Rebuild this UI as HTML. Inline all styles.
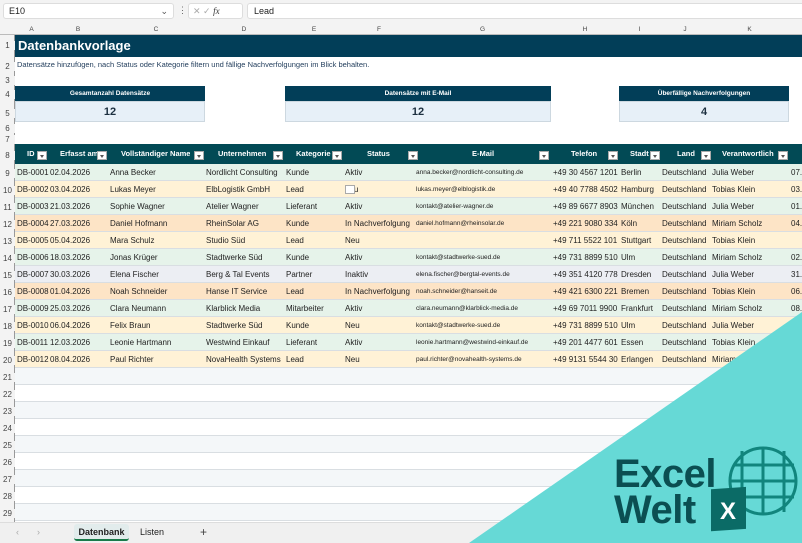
<!DOCTYPE html>
<html><head><meta charset="utf-8"><style>
*{margin:0;padding:0;box-sizing:border-box}
body{width:802px;height:543px;overflow:hidden;background:#fff;font-family:"Liberation Sans",sans-serif;position:relative;color:#222}
.a{position:absolute;white-space:nowrap;overflow:hidden}
.rh{position:absolute;left:0;width:15px;font-size:8px;color:#444;text-align:center;background:#f3f3f3}
.r{position:absolute;left:15px;width:787px;height:17px;border-bottom:1px solid #d9dee2;font-size:8px;line-height:17px}
.r span{position:absolute;top:0;white-space:nowrap;overflow:hidden}
.em{font-size:6.5px}
.hd span{color:#fff;font-weight:bold;font-size:7.5px}
.dd{position:absolute;width:10px;height:9px;background:#fff;border:1px solid #aaa;top:7px}
.dd:after{content:"";position:absolute;left:2px;top:3px;border:2.5px solid transparent;border-top:3px solid #555}
</style></head><body>
<div class="a" style="left:0;top:0;width:802px;height:24px;background:#f3f3f3"></div>
<div class="a" style="left:3px;top:3px;width:171px;height:16px;background:#fff;border:1px solid #ddd;border-radius:3px;font-size:9px;line-height:15px;padding-left:5px">E10<span style="position:absolute;right:5px;color:#555">⌄</span></div>
<div class="a" style="left:178px;top:5px;font-size:9px;color:#666">⋮</div>
<div class="a" style="left:188px;top:3px;width:55px;height:16px;background:#fff;border:1px solid #ddd;border-radius:3px;font-size:9px;line-height:15px;color:#aaa;padding-left:4px">✕ ✓ <i style="color:#333;font-family:'Liberation Serif'">fx</i></div>
<div class="a" style="left:247px;top:3px;width:560px;height:16px;background:#fff;border:1px solid #ddd;border-radius:3px;font-size:9px;line-height:15px;padding-left:6px">Lead</div>
<div class="a" style="left:0;top:24px;width:802px;height:11px;background:#f3f3f3;border-bottom:1px solid #bbb;font-size:6.5px;color:#444;line-height:11px">
<span class="a" style="left:15px;width:33px;text-align:center">A</span><span class="a" style="left:48px;width:60px;text-align:center">B</span><span class="a" style="left:108px;width:96px;text-align:center">C</span><span class="a" style="left:204px;width:80px;text-align:center">D</span><span class="a" style="left:284px;width:60px;text-align:center">E</span><span class="a" style="left:344px;width:70px;text-align:center">F</span><span class="a" style="left:414px;width:137px;text-align:center">G</span><span class="a" style="left:551px;width:68px;text-align:center">H</span><span class="a" style="left:619px;width:41px;text-align:center">I</span><span class="a" style="left:660px;width:50px;text-align:center">J</span><span class="a" style="left:710px;width:79px;text-align:center">K</span></div>
<div class="a" style="left:0;top:35px;width:15px;height:508px;background:#f3f3f3;border-right:1px solid #999"></div>
<div class="rh" style="top:41px">1</div><div class="rh" style="top:62px">2</div><div class="rh" style="top:76px">3</div><div class="rh" style="top:90px">4</div><div class="rh" style="top:109px">5</div><div class="rh" style="top:124px">6</div><div class="rh" style="top:135px">7</div><div class="rh" style="top:151px">8</div>
<div class="a" style="left:15px;top:35px;width:787px;height:22px;background:#023e58;color:#fff;font-weight:bold;font-size:13px;line-height:22px;padding-left:3px">Datenbankvorlage</div>
<div class="a" style="left:17px;top:60px;font-size:7.5px;color:#1f3b5a">Datensätze hinzufügen, nach Status oder Kategorie filtern und fällige Nachverfolgungen im Blick behalten.</div>
<div class="a" style="left:15px;top:86px;width:190px;height:15px;background:#023e58;color:#fff;font-weight:bold;font-size:6.5px;line-height:15px;text-align:center">Gesamtanzahl Datensätze</div>
<div class="a" style="left:15px;top:101px;width:190px;height:21px;background:#e7f0f8;border:1px solid #cdd8e0;font-weight:bold;font-size:11px;line-height:20px;text-align:center;color:#1d3040">12</div>
<div class="a" style="left:285px;top:86px;width:266px;height:15px;background:#023e58;color:#fff;font-weight:bold;font-size:6.5px;line-height:15px;text-align:center">Datensätze mit E-Mail</div>
<div class="a" style="left:285px;top:101px;width:266px;height:21px;background:#e7f0f8;border:1px solid #cdd8e0;font-weight:bold;font-size:11px;line-height:20px;text-align:center;color:#1d3040">12</div>
<div class="a" style="left:619px;top:86px;width:170px;height:15px;background:#023e58;color:#fff;font-weight:bold;font-size:6.5px;line-height:15px;text-align:center">Überfällige Nachverfolgungen</div>
<div class="a" style="left:619px;top:101px;width:170px;height:21px;background:#e7f0f8;border:1px solid #cdd8e0;font-weight:bold;font-size:11px;line-height:20px;text-align:center;color:#1d3040">4</div>
<div class="r hd" style="top:144px;height:20px;background:#024a55;line-height:20px;border:0">
<span style="left:12px">ID</span><div class="dd" style="left:22px"></div>
<span style="left:45px">Erfasst am</span><div class="dd" style="left:82px"></div>
<span style="left:106px">Vollständiger Name</span><div class="dd" style="left:179px"></div>
<span style="left:203px">Unternehmen</span><div class="dd" style="left:258px"></div>
<span style="left:281px">Kategorie</span><div class="dd" style="left:317px"></div>
<span style="left:352px">Status</span><div class="dd" style="left:393px"></div>
<span style="left:457px">E-Mail</span><div class="dd" style="left:524px"></div>
<span style="left:556px">Telefon</span><div class="dd" style="left:593px"></div>
<span style="left:615px">Stadt</span><div class="dd" style="left:635px"></div>
<span style="left:662px">Land</span><div class="dd" style="left:686px"></div>
<span style="left:707px">Verantwortlich</span><div class="dd" style="left:763px"></div>
</div>
<div id="rows"></div>
<script>
var d=[
["#e6f3ea","DB-0001","02.04.2026","Anna Becker","Nordlicht Consulting","Kunde","Aktiv","anna.becker@nordlicht-consulting.de","+49 30 4567 1201","Berlin","Julia Weber","07."],
["#fff2d6","DB-0002","03.04.2026","Lukas Meyer","ElbLogistik GmbH","Lead","&nbsp;&nbsp;&nbsp;&nbsp;u","lukas.meyer@elblogistik.de","+49 40 7788 4502","Hamburg","Tobias Klein","03."],
["#e6f3ea","DB-0003","21.03.2026","Sophie Wagner","Atelier Wagner","Lieferant","Aktiv","kontakt@atelier-wagner.de","+49 89 6677 8903","München","Julia Weber","01."],
["#fde4c6","DB-0004","27.03.2026","Daniel Hofmann","RheinSolar AG","Kunde","In Nachverfolgung","daniel.hofmann@rheinsolar.de","+49 221 9080 334","Köln","Miriam Scholz","04."],
["#fff2d6","DB-0005","05.04.2026","Mara Schulz","Studio Süd","Lead","Neu","","+49 711 5522 101","Stuttgart","Tobias Klein",""],
["#e6f3ea","DB-0006","18.03.2026","Jonas Krüger","Stadtwerke Süd","Kunde","Aktiv","kontakt@stadtwerke-sued.de","+49 731 8899 510","Ulm","Miriam Scholz","02."],
["#eceef3","DB-0007","30.03.2026","Elena Fischer","Berg &amp; Tal Events","Partner","Inaktiv","elena.fischer@bergtal-events.de","+49 351 4120 778","Dresden","Julia Weber","31."],
["#fde4c6","DB-0008","01.04.2026","Noah Schneider","Hanse IT Service","Lead","In Nachverfolgung","noah.schneider@hanseit.de","+49 421 6300 221","Bremen","Tobias Klein","06."],
["#e6f3ea","DB-0009","25.03.2026","Clara Neumann","Klarblick Media","Mitarbeiter","Aktiv","clara.neumann@klarblick-media.de","+49 69 7011 9900","Frankfurt","Miriam Scholz","08."],
["#fff2d6","DB-0010","06.04.2026","Felix Braun","Stadtwerke Süd","Kunde","Neu","kontakt@stadtwerke-sued.de","+49 731 8899 510","Ulm","Julia Weber",""],
["#e6f3ea","DB-0011","12.03.2026","Leonie Hartmann","Westwind Einkauf","Lieferant","Aktiv","leonie.hartmann@westwind-einkauf.de","+49 201 4477 601","Essen","Tobias Klein",""],
["#fff2d6","DB-0012","08.04.2026","Paul Richter","NovaHealth Systems","Lead","Neu","paul.richter@novahealth-systems.de","+49 9131 5544 30","Erlangen","Miriam Scholz",""]];
var x=[2,35,95,191,271,330,401,538,606,647,697,776],w=[33,60,96,80,59,70,137,68,41,50,79,30];
var h="";
for(var i=0;i<21;i++){var y=164+i*17;h+='<div class="rh" style="top:'+(y+5)+'px">'+(9+i)+'</div>';
if(i<12){var r=d[i];var f=r.slice(1,10).concat(["Deutschland",r[10],r[11]]);
h+='<div class="r" style="top:'+y+'px;background:'+r[0]+'">';
var cols=[0,1,2,3,4,5,6,7,8,9,10,11];var vals=[f[0],f[1],f[2],f[3],f[4],f[5],f[6],f[7],f[8],"Deutschland",r[10],r[11]];
for(var j=0;j<12;j++){var cls=j==6?' class="em"':'';
h+='<span'+cls+' style="left:'+x[j]+'px;width:'+w[j]+'px">'+vals[j]+'</span>';}
h+='</div>';}
else h+='<div class="r" style="top:'+y+'px;background:'+(i%2==0?'#f4f7f9':'#fff')+'"></div>';}
document.getElementById('rows').innerHTML=h;
</script>
<div class="a" style="left:345px;top:185px;width:10px;height:9px;background:#fff;border:1px solid #aaa"></div>
<div class="a" style="left:0;top:522px;width:802px;height:21px;background:#f0f0f0;border-top:1px solid #ddd;font-size:9px">
<span class="a" style="left:16px;top:4px;color:#aaa">‹</span><span class="a" style="left:37px;top:4px;color:#aaa">›</span>
<span class="a" style="left:74px;top:1px;width:55px;height:17px;background:#e2ecec;border-radius:3px;text-align:center;line-height:16px;font-weight:bold;color:#222;border-bottom:2px solid #1a7a4a">Datenbank</span>
<span class="a" style="left:140px;top:4px;color:#222">Listen</span>
<span class="a" style="left:200px;top:2px;color:#444;font-size:12px">+</span></div>
<svg class="a" style="left:0;top:0" width="802" height="543">
<polygon points="469,543 802,312 802,543" fill="#66d9d6"/>
<g fill="none" stroke="#11857d" stroke-width="3">
<circle cx="763" cy="481" r="33"/>
<line x1="742" y1="451" x2="742" y2="512"/><line x1="763" y1="448" x2="763" y2="514"/><line x1="784" y1="451" x2="784" y2="512"/>
<line x1="733" y1="465" x2="794" y2="465"/><line x1="730" y1="481" x2="796" y2="481"/><line x1="733" y1="497" x2="794" y2="497"/>
</g>
<rect x="711" y="487" width="35" height="42" fill="#0b6b66" transform="skewY(-4) translate(0,52)"/>
<text x="728" y="519" fill="#fff" font-family="Liberation Sans" font-weight="bold" font-size="24" text-anchor="middle">X</text>
<text x="614" y="487" fill="#0b4f52" font-family="Liberation Sans" font-weight="bold" font-size="40" letter-spacing="-0.5">Excel</text>
<text x="614" y="523" fill="#0b4f52" font-family="Liberation Sans" font-weight="bold" font-size="40" letter-spacing="-0.5">Welt</text>
</svg>
</body></html>
